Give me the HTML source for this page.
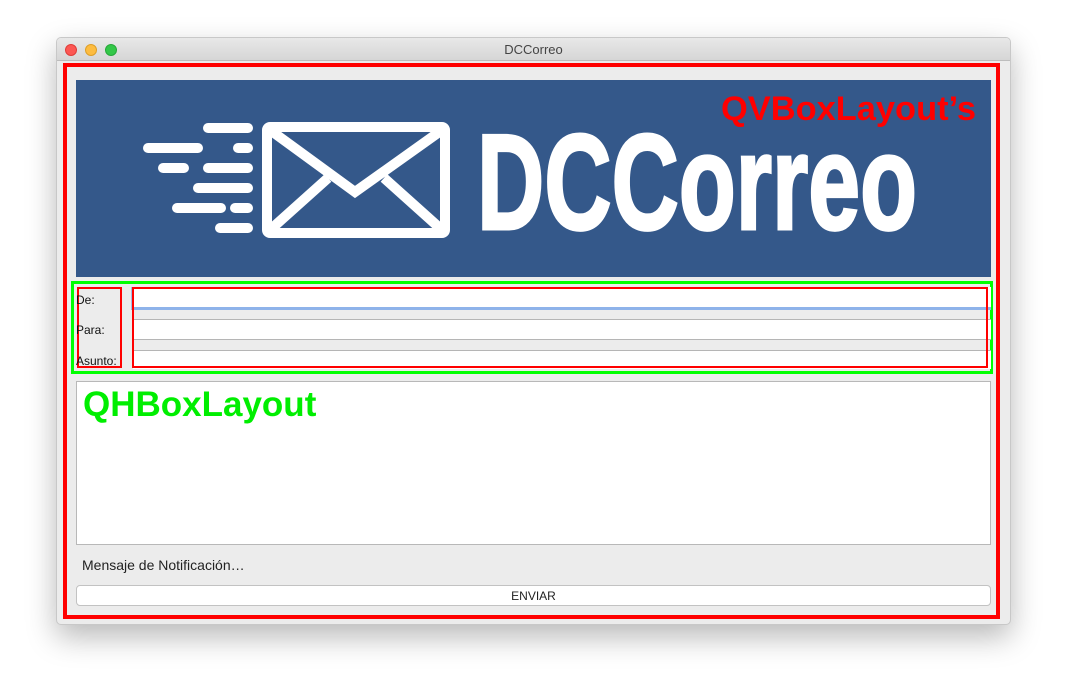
<!DOCTYPE html>
<html><head><meta charset="utf-8"><style>
body{margin:0;width:1067px;height:699px;background:#fff;position:relative;overflow:hidden;font-family:"Liberation Sans",sans-serif}
.a{position:absolute;box-sizing:border-box}
</style></head><body>
<div class="a" style="left:56px;top:37px;width:955px;height:588px;background:#ececec;border:1px solid #c8c8c8;border-radius:5px;box-shadow:0 12px 30px rgba(0,0,0,0.28);overflow:hidden">
  <div class="a" style="left:0;top:0;width:100%;height:23px;background:linear-gradient(#e8e8e8,#d6d6d6);border-bottom:1px solid #bdbdbd;text-align:center;font-size:13px;line-height:23px;color:#444">DCCorreo</div>
  <div class="a" style="left:8px;top:6px;width:12px;height:12px;border-radius:50%;background:#fc5753;border:1px solid #df3d39"></div>
  <div class="a" style="left:28px;top:6px;width:12px;height:12px;border-radius:50%;background:#fdbc40;border:1px solid #de9f27"></div>
  <div class="a" style="left:48px;top:6px;width:12px;height:12px;border-radius:50%;background:#33c748;border:1px solid #27a83a"></div>
</div>
<div class="a" style="left:63px;top:63px;width:937px;height:556px;border:4px solid #ff0000"></div>
<div class="a" style="left:76px;top:80px;width:915px;height:197px;background:#34588a"></div>
<svg class="a" style="left:0;top:0" width="1067" height="699">
<g stroke="#fff" stroke-width="10" stroke-linecap="round">
<line x1="208" y1="128" x2="248" y2="128"/>
<line x1="148" y1="148" x2="198" y2="148"/><line x1="238" y1="148" x2="248" y2="148"/>
<line x1="163" y1="168" x2="184" y2="168"/><line x1="208" y1="168" x2="248" y2="168"/>
<line x1="198" y1="188" x2="248" y2="188"/>
<line x1="177" y1="208" x2="221" y2="208"/><line x1="235" y1="208" x2="248" y2="208"/>
<line x1="220" y1="228" x2="248" y2="228"/>
</g>
<rect x="267" y="127" width="178" height="106" rx="3" fill="none" stroke="#fff" stroke-width="10"/>
<path d="M270 130 L355 192 L442 130 M270 230 L328 178 M442 230 L384 178" fill="none" stroke="#fff" stroke-width="10"/>
<text x="477" y="229" font-family="Liberation Sans" font-weight="bold" font-size="136" fill="#fff" stroke="#fff" stroke-width="3" textLength="440" lengthAdjust="spacingAndGlyphs">DCCorreo</text>
<text x="976" y="120" text-anchor="end" font-family="Liberation Sans" font-weight="bold" font-size="34" fill="#ff0000" textLength="255" lengthAdjust="spacingAndGlyphs">QVBoxLayout’s</text>
</svg>
<div class="a" style="left:71px;top:281px;width:922px;height:93px;border:3px solid #00ff00"></div>
<div class="a" style="left:131px;top:287px;width:860px;height:23px;background:#fff;border-bottom:3px solid #8eb3ea;border-left:3px solid #9fbde9"></div>
<div class="a" style="left:133px;top:319px;width:858px;height:21px;background:#fff;border-top:1px solid #b5b5b5;border-bottom:1px solid #b5b5b5"></div>
<div class="a" style="left:133px;top:350px;width:858px;height:19px;background:#fff;border-top:1px solid #b5b5b5"></div>
<div class="a" style="left:132px;top:287px;width:856px;height:81px;border:2px solid #ff0000"></div>
<div class="a" style="left:77px;top:287px;width:45px;height:81px;border:2px solid #ff0000"></div>
<div class="a" style="left:76px;top:293px;font-size:12px;color:#111">De:</div>
<div class="a" style="left:76px;top:323px;font-size:12px;color:#111">Para:</div>
<div class="a" style="left:76px;top:354px;font-size:12px;color:#111">Asunto:</div>
<div class="a" style="left:76px;top:381px;width:915px;height:164px;background:#fff;border:1px solid #b8b8b8"></div>
<div class="a" style="left:83px;top:385px;font-size:35px;font-weight:bold;color:#00ee00">QHBoxLayout</div>
<div class="a" style="left:82px;top:557px;font-size:14px;color:#222">Mensaje de Notificación…</div>
<div class="a" style="left:76px;top:585px;width:915px;height:21px;background:#fff;border:1px solid #c2c2c2;border-radius:4px;text-align:center;font-size:12px;line-height:20px;color:#222">ENVIAR</div>
</body></html>
